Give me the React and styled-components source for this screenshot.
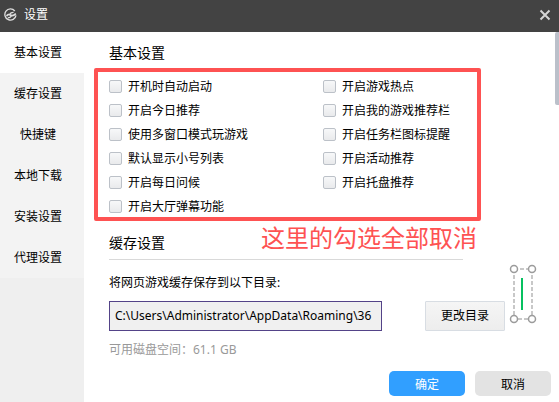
import React, { useState } from "react";
import styled, { createGlobalStyle } from "styled-components";

const GlobalStyle = createGlobalStyle`
  * {
    box-sizing: border-box;
  }

  body {
    margin: 0;
    background: #fff;
    color: #000;
    font-family: "Noto Sans", "Noto Sans CJK SC", sans-serif;
    font-size: 12px;
    line-height: 18px;
  }

  button,
  input {
    font-family: inherit;
    font-size: inherit;
    color: inherit;
  }
`;

const Window = styled.div`
  display: flex;
  flex-direction: column;
  min-height: 100vh;
`;

const TitleBar = styled.header`
  display: flex;
  align-items: center;
  height: 32px;
  padding: 0 8px 2px 4px;
  background: #434343;
  color: #fff;
`;

const Title = styled.h1`
  flex: 1;
  margin: 0 0 0 7px;
  font-size: 12px;
  font-weight: 400;
  line-height: 18px;
`;

const CloseButton = styled.button`
  display: flex;
  padding: 0;
  border: none;
  background: none;
  cursor: pointer;
`;

const Body = styled.div`
  display: flex;
  flex: 1;
`;

const Sidebar = styled.nav`
  flex: none;
  width: 84px;
  background: #efefef;
`;

const TabButton = styled.button`
  display: block;
  width: 100%;
  height: 41px;
  padding: 0 8px 2px 0;
  border: none;
  background: ${(props) => (props.$active ? "#fff" : "#f3f3f3")};
  cursor: pointer;
`;

const Content = styled.main`
  position: relative;
  flex: 1;
  min-width: 0;
  padding: 0 8px 5px 10px;
`;

const Heading = styled.h2`
  margin: 0;
  padding: 6px 15px 0;
  font-size: 14px;
  font-weight: 400;
  line-height: 30px;
`;

const RuledHeading = styled(Heading)`
  margin: 0 88px 0 15px;
  padding: 7px 0 1px;
  border-bottom: 1px solid #d9d9d9;
`;

const OptionsBox = styled.div`
  display: grid;
  grid-template-columns: 214px 1fr;
  align-items: start;
  margin-right: 70px;
  padding: 6px 8px 1px 11px;
  border: 4px solid #fe5252;
  border-radius: 2px;
`;

const OptionColumn = styled.div`
  display: grid;
  gap: 6px;
`;

const Option = styled.label`
  display: flex;
  align-items: center;
  gap: 6px;
  height: 18px;
  white-space: nowrap;
`;

const Checkbox = styled.input`
  appearance: none;
  display: grid;
  place-content: center;
  width: 13px;
  height: 13px;
  margin: 0 0 1px;
  border: 1px solid #bcc1c8;
  border-radius: 2px;
  background: linear-gradient(#f7f8f9, #e9eaec);

  &:checked::before {
    content: "";
    width: 7px;
    height: 7px;
    background: #319fff;
  }
`;

const CacheForm = styled.div`
  padding: 14px 46px 0 15px;
`;

const PathLabel = styled.label`
  display: block;
  margin-bottom: 9px;
`;

const PathRow = styled.div`
  display: flex;
  gap: 43px;
`;

const PathInput = styled.input`
  flex: 1;
  min-width: 0;
  height: 30px;
  padding: 0 5px 2px;
  border: 1px solid #534388;
  background: #f0f0f0;
  outline: none;
`;

const ChangeButton = styled.button`
  width: 80px;
  height: 30px;
  padding: 0 0 2px;
  border: 1px solid #d8dde3;
  border-radius: 1px;
  background: linear-gradient(#f5f5f5, #ededed);
  cursor: pointer;
`;

const DiskSpace = styled.p`
  margin: 10px 0 12px;
  color: #999;
`;

const Footer = styled.footer`
  display: flex;
  justify-content: flex-end;
  gap: 10px;
`;

const FooterButton = styled.button`
  width: 76px;
  height: 25px;
  padding: 0;
  border: none;
  border-radius: 5px;
  background: ${(props) => (props.$primary ? "#319fff" : "#e3e3e3")};
  color: ${(props) => (props.$primary ? "#fff" : "#000")};
  cursor: pointer;
`;

const Note = styled.p`
  position: absolute;
  top: 189px;
  right: 82px;
  margin: 0;
  color: #fe5252;
  font-size: 24px;
  line-height: 34px;
  white-space: nowrap;
`;

const Marker = styled.svg`
  position: absolute;
  top: 232px;
  right: 22px;
`;

const ScrollThumb = styled.div`
  position: absolute;
  top: 0;
  right: 0;
  width: 4px;
  height: 73px;
  border-radius: 2px 0 0 2px;
  background: #bbc0ca;
`;

const tabs = ["基本设置", "缓存设置", "快捷键", "本地下载", "安装设置", "代理设置"];

const optionColumns = [
  [
    "开机时自动启动",
    "开启今日推荐",
    "使用多窗口模式玩游戏",
    "默认显示小号列表",
    "开启每日问候",
    "开启大厅弹幕功能",
  ],
  [
    "开启游戏热点",
    "开启我的游戏推荐栏",
    "开启任务栏图标提醒",
    "开启活动推荐",
    "开启托盘推荐",
  ],
];

const Logo = () => (
  <svg width="13" height="14" viewBox="0 0 13 14" fill="none" stroke="#dedede">
    <path d="M10.8 3A5.6 5.6 0 1 0 12 7.4" strokeWidth="1.3" />
    <path d="M2.6 8.2C3.4 6.4 5 6.2 6.3 7S9.4 8.2 11.8 5.6" strokeWidth="1.6" />
    <path d="M5.6 6.4C6.4 4.9 7.6 4.3 9.6 4.4" strokeWidth="1.2" />
    <path d="M7.4 7.8C7 9 5.8 9.8 3.8 9.8" strokeWidth="1.2" />
  </svg>
);

const CloseIcon = () => (
  <svg width="12" height="12" viewBox="0 0 12 12" stroke="#d6d6d6" strokeWidth="2">
    <path d="M1.5 1.5l9 9M10.5 1.5l-9 9" />
  </svg>
);

const SelectionMarker = () => (
  <Marker width="28" height="60" viewBox="0 0 28 60" fill="none">
    <rect x="5" y="5" width="18" height="50" stroke="#c8c8c8" strokeWidth="2" strokeDasharray="4 2" />
    <path d="M13 14v32" stroke="#07c160" strokeWidth="2" />
    <g fill="#fff" stroke="#9b9b9b" strokeWidth="1.5">
      <circle cx="5" cy="5" r="3.5" />
      <circle cx="23" cy="5" r="3.5" />
      <circle cx="5" cy="55" r="3.5" />
      <circle cx="23" cy="55" r="3.5" />
    </g>
  </Marker>
);

const App = () => {
  const [activeTab, setActiveTab] = useState("基本设置");
  const [checked, setChecked] = useState({});

  const toggleOption = (name) => {
    setChecked({ ...checked, [name]: !checked[name] });
  };

  return (
    <Window>
      <GlobalStyle />
      <TitleBar>
        <Logo />
        <Title>设置</Title>
        <CloseButton type="button" aria-label="关闭">
          <CloseIcon />
        </CloseButton>
      </TitleBar>
      <Body>
        <Sidebar>
          {tabs.map((tab) => (
            <TabButton
              key={tab}
              type="button"
              $active={tab === activeTab}
              onClick={() => setActiveTab(tab)}
            >
              {tab}
            </TabButton>
          ))}
        </Sidebar>
        <Content>
          <Heading>基本设置</Heading>
          <OptionsBox>
            {optionColumns.map((column, index) => (
              <OptionColumn key={index}>
                {column.map((name) => (
                  <Option key={name}>
                    <Checkbox
                      type="checkbox"
                      checked={!!checked[name]}
                      onChange={() => toggleOption(name)}
                    />
                    {name}
                  </Option>
                ))}
              </OptionColumn>
            ))}
          </OptionsBox>
          <RuledHeading>缓存设置</RuledHeading>
          <CacheForm>
            <PathLabel htmlFor="cache-path">将网页游戏缓存保存到以下目录:</PathLabel>
            <PathRow>
              <PathInput
                id="cache-path"
                type="text"
                readOnly
                value="C:\Users\Administrator\AppData\Roaming\36"
              />
              <ChangeButton type="button">更改目录</ChangeButton>
            </PathRow>
            <DiskSpace>可用磁盘空间：61.1 GB</DiskSpace>
          </CacheForm>
          <Footer>
            <FooterButton type="button" $primary>
              确定
            </FooterButton>
            <FooterButton type="button">取消</FooterButton>
          </Footer>
          <Note>这里的勾选全部取消</Note>
          <SelectionMarker />
          <ScrollThumb />
        </Content>
      </Body>
    </Window>
  );
};

export default App;
